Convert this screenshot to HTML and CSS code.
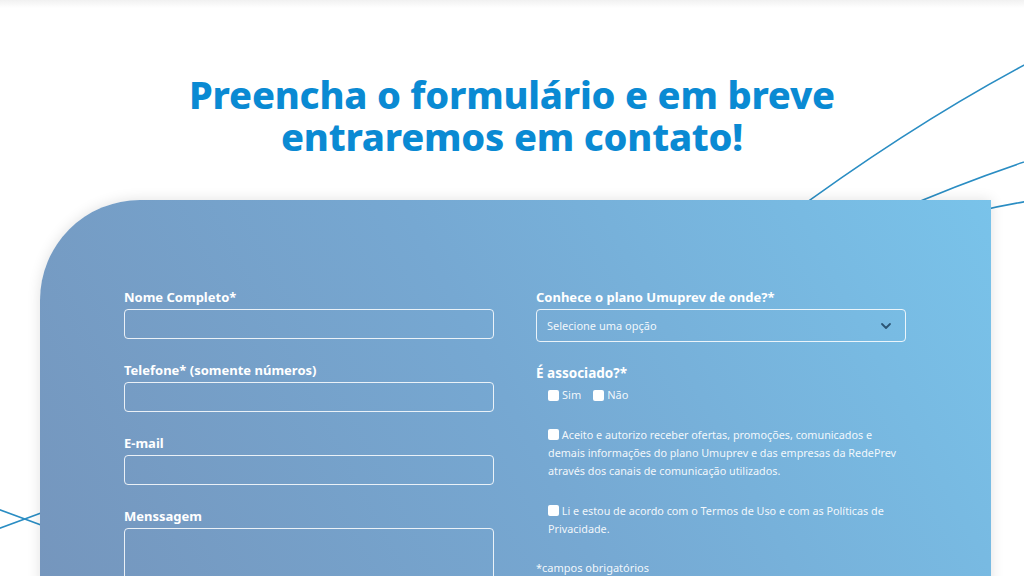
FILE: index.html
```html
<!DOCTYPE html>
<html lang="pt-BR">
<head>
<meta charset="utf-8">
<title>Contato</title>
<link rel="stylesheet" href="styles.css">
</head>
<body>
<div class="page">
  <div class="topshade"></div>
  <svg class="deco" width="1024" height="576" viewBox="0 0 1024 576" aria-hidden="true">
    <path d="M780 222 C 850 170, 930 115, 1030 62" />
    <path d="M895 212 C 940 192, 985 175, 1030 160" />
    <path d="M975 212 C 995 207, 1010 204, 1030 201" />
    <path d="M-5 508 L 60 532" />
    <path d="M-5 530 L 60 506" />
  </svg>
  <h1 class="title">Preencha o formulário e em breve<br>entraremos em contato!</h1>
  <div class="card">
    <form class="grid">
      <div class="col">
        <label class="field">
          <span class="label">Nome Completo*</span>
          <input class="input" type="text">
        </label>
        <label class="field">
          <span class="label">Telefone* (somente números)</span>
          <input class="input" type="text">
        </label>
        <label class="field">
          <span class="label">E-mail</span>
          <input class="input" type="text">
        </label>
        <label class="field">
          <span class="label">Menssagem</span>
          <textarea class="input area"></textarea>
        </label>
      </div>
      <div class="col">
        <div class="field">
          <span class="label">Conhece o plano Umuprev de onde?*</span>
          <div class="select">
            <span>Selecione uma opção</span>
            <svg width="12" height="8" viewBox="0 0 12 8"><path d="M2 2 L6 6 L10 2" fill="none" stroke="#2c5574" stroke-width="1.8" stroke-linecap="round" stroke-linejoin="round"/></svg>
          </div>
        </div>
        <div class="field assoc">
          <span class="label">É associado?*</span>
          <div class="opts">
            <label class="opt"><span class="box"></span>Sim</label>
            <label class="opt"><span class="box"></span>Não</label>
          </div>
        </div>
        <p class="consent"><span class="box"></span> Aceito e autorizo receber ofertas, promoções, comunicados e demais informações do plano Umuprev e das empresas da RedePrev através dos canais de comunicação utilizados.</p>
        <p class="consent"><span class="box"></span> Li e estou de acordo com o Termos de Uso e com as Políticas de Privacidade.</p>
        <p class="req">*campos obrigatórios</p>
      </div>
    </form>
  </div>
</div>
</body>
</html>
```
FILE: styles.css
```css
* { box-sizing: border-box; }
html, body { margin: 0; padding: 0; }
body {
  width: 1024px;
  height: 576px;
  overflow: hidden;
  background: #ffffff;
  font-family: "Noto Sans", "Open Sans", sans-serif;
}
.page {
  position: relative;
  width: 1024px;
  height: 576px;
  overflow: hidden;
  display: flex;
  flex-direction: column;
}
.topshade {
  position: absolute;
  left: 0; top: 0; right: 0;
  height: 8px;
  background: linear-gradient(#f1f1f1, rgba(255,255,255,0));
}
.deco {
  position: absolute;
  left: 0; top: 0;
  z-index: 0;
}
.deco path {
  fill: none;
  stroke: #2a8dc3;
  stroke-width: 1.6;
}
.title {
  position: relative;
  z-index: 1;
  margin: 73px 0 0;
  text-align: center;
  color: #0a8ad3;
  font-family: "Noto Sans", sans-serif;
  font-weight: 800;
  font-size: 38px;
  line-height: 42px;
  letter-spacing: -0.2px;
}
.card {
  position: relative;
  z-index: 1;
  margin: 43px 0 0 40px;
  width: 951px;
  flex: 1;
  border-top-left-radius: 100px;
  background: linear-gradient(62deg, #7595bc 0%, #76a8d2 50%, #79c3ea 100%);
  box-shadow: 0 0 14px rgba(0,0,0,0.12);
  padding: 88px 85px 0 84px;
}
.grid {
  display: grid;
  grid-template-columns: 370px 370px;
  column-gap: 42px;
  margin: 0;
}
.col { display: flex; flex-direction: column; }
.field {
  display: flex;
  flex-direction: column;
  margin-bottom: 22px;
}
.label {
  color: #ffffff;
  font-weight: 700;
  font-size: 13px;
  line-height: 18px;
  margin-bottom: 3px;
}
.input {
  height: 30px;
  width: 100%;
  background: transparent;
  border: 1px solid rgba(255,255,255,0.85);
  border-radius: 4px;
  outline: none;
  font: inherit;
}
.area { height: 80px; resize: none; }
.select {
  height: 33px;
  border: 1px solid rgba(255,255,255,0.85);
  border-radius: 4px;
  display: flex;
  align-items: center;
  justify-content: space-between;
  padding: 0 13px 0 10px;
  color: rgba(255,255,255,0.92);
  font-size: 11px;
}
.assoc { margin-top: 0; margin-bottom: 0; }
.assoc .label { font-size: 13.5px; margin-bottom: 4px; }
.opts {
  display: flex;
  gap: 12px;
  padding-left: 12px;
  margin-top: 0;
}
.opt {
  display: flex;
  align-items: center;
  color: rgba(255,255,255,0.92);
  font-size: 11px;
  line-height: 18px;
}
.box {
  display: inline-block;
  width: 11px;
  height: 11px;
  background: #ffffff;
  border-radius: 2px;
  margin-right: 3px;
  vertical-align: -1px;
}
.consent {
  margin: 22px 0 0;
  padding-left: 12px;
  color: rgba(255,255,255,0.92);
  font-size: 10.8px;
  line-height: 18px;
}
.consent + .consent { margin-top: 22px; }
.consent .box { margin-right: 0; }
.req {
  margin: 21px 0 0;
  color: rgba(255,255,255,0.92);
  font-size: 11px;
  line-height: 18px;
}
```
